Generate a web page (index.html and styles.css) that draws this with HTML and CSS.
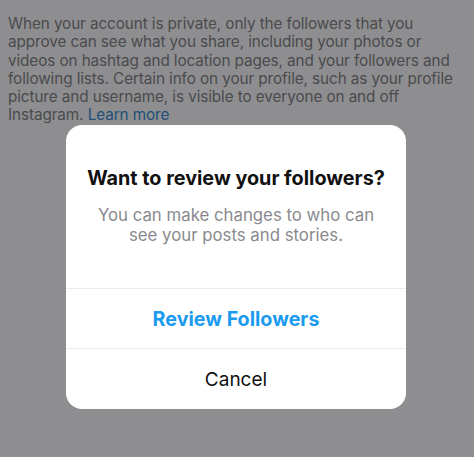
FILE: index.html
```html
<!DOCTYPE html>
<html>
<head>
  <title>Account Privacy</title>
  <link rel="stylesheet" href="styles.css">
</head>
<body>
  <div class="page">
    <p class="privacy-text">
      When your account is private, only the followers that you<br>
      approve can see what you share, including your photos or<br>
      videos on hashtag and location pages, and your followers and<br>
      following lists. Certain info on your profile, such as your profile<br>
      picture and username, is visible to everyone on and off<br>
      Instagram. <a href="#" class="learn-more">Learn more</a>
    </p>
  </div>

  <div class="overlay">
    <div class="dialog">
      <div class="dialog-body">
        <h2 class="dialog-title">Want to review your followers?</h2>
        <p class="dialog-text">You can make changes to who can see your posts and stories.</p>
      </div>
      <button class="dialog-button primary">Review Followers</button>
      <button class="dialog-button">Cancel</button>
    </div>
  </div>
</body>
</html>
```

FILE: styles.css
```css
body {
  font-family: Inter, "Liberation Sans", Arial, sans-serif;
  margin: 0;
  background-color: #8e8e90;
  width: 474px;
  height: 457px;
  overflow: hidden;
  position: relative;
}

.page {
  padding: 15px 0 0 8px;
}

.privacy-text {
  margin: 0;
  font-size: 15.3px;
  line-height: 18.3px;
  letter-spacing: -0.1px;
  white-space: nowrap;
  color: #4a4a4d;
}

.learn-more {
  color: #1d4e79;
  text-decoration: none;
}

.overlay {
  position: absolute;
  top: 125px;
  left: 66px;
}

.dialog {
  width: 340px;
  background-color: #fff;
  border-radius: 16px;
  overflow: hidden;
  display: flex;
  flex-direction: column;
}

.dialog-body {
  padding: 40px 16px 0 16px;
  height: 123px;
  text-align: center;
  border-bottom: 1px solid #ececec;
}

.dialog-title {
  margin: 0 0 14px 0;
  font-size: 19.8px;
  font-weight: 700;
  color: #111;
  line-height: 26px;
}

.dialog-text {
  margin: 0 14px;
  font-size: 16.8px;
  line-height: 20px;
  color: #8a8a8e;
}

.dialog-button {
  height: 60px;
  border: 0;
  background: none;
  font-family: inherit;
  font-size: 19px;
  color: #111;
  border-bottom: 1px solid #ececec;
}

.dialog-button:last-child {
  border-bottom: 0;
}

.dialog-button.primary {
  color: #1a9bf0;
  font-weight: 700;
  font-size: 19.7px;
}
```
